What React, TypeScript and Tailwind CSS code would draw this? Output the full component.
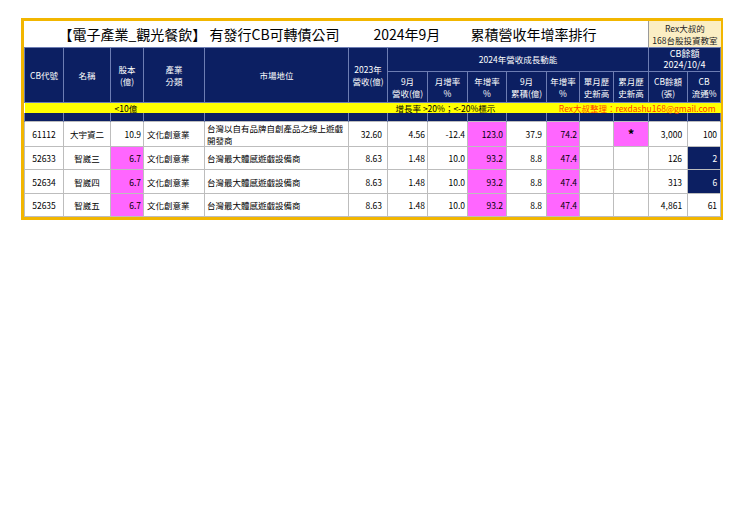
import React from "react";

type Row = {
  code: string;
  name: string;
  cap: string;
  capPink: boolean;
  industry: string;
  market: string;
  rev23: string;
  sep: string;
  mom: string;
  yoy: string;
  cum: string;
  cumYoy: string;
  hiMonth: string;
  hiCum: string;
  cbLeft: string;
  flow: string;
  flowNavy: boolean;
  height: string;
};

const rows: Row[] = [
  {
    code: "61112",
    name: "大宇資二",
    cap: "10.9",
    capPink: false,
    industry: "文化創意業",
    market: "台灣以自有品牌自創產品之線上遊戲開發商",
    rev23: "32.60",
    sep: "4.56",
    mom: "-12.4",
    yoy: "123.0",
    cum: "37.9",
    cumYoy: "74.2",
    hiMonth: "",
    hiCum: "*",
    cbLeft: "3,000",
    flow: "100",
    flowNavy: false,
    height: "h-[25px]",
  },
  {
    code: "52633",
    name: "智崴三",
    cap: "6.7",
    capPink: true,
    industry: "文化創意業",
    market: "台灣最大體感遊戲設備商",
    rev23: "8.63",
    sep: "1.48",
    mom: "10.0",
    yoy: "93.2",
    cum: "8.8",
    cumYoy: "47.4",
    hiMonth: "",
    hiCum: "",
    cbLeft: "126",
    flow: "2",
    flowNavy: true,
    height: "h-[23px]",
  },
  {
    code: "52634",
    name: "智崴四",
    cap: "6.7",
    capPink: true,
    industry: "文化創意業",
    market: "台灣最大體感遊戲設備商",
    rev23: "8.63",
    sep: "1.48",
    mom: "10.0",
    yoy: "93.2",
    cum: "8.8",
    cumYoy: "47.4",
    hiMonth: "",
    hiCum: "",
    cbLeft: "313",
    flow: "6",
    flowNavy: true,
    height: "h-[24px]",
  },
  {
    code: "52635",
    name: "智崴五",
    cap: "6.7",
    capPink: true,
    industry: "文化創意業",
    market: "台灣最大體感遊戲設備商",
    rev23: "8.63",
    sep: "1.48",
    mom: "10.0",
    yoy: "93.2",
    cum: "8.8",
    cumYoy: "47.4",
    hiMonth: "",
    hiCum: "",
    cbLeft: "4,861",
    flow: "61",
    flowNavy: false,
    height: "h-[23px]",
  },
];

const th = "border border-[#6d7db3] bg-[#0c1f62] text-white text-[8.5px] leading-[12px] font-normal text-center align-middle p-0";
const td = "border border-[#bdbdbd] text-[8.5px] leading-[12px] text-black align-middle p-0";

export default function App() {
  return (
    <div className="min-h-[523px] bg-white pt-[18px] pl-[21px] font-['Noto_Sans_CJK_TC',sans-serif]">
      <div className="w-[702px] border-[3px] border-[#f2b600] bg-white">
        <table className="w-[696px] table-fixed border-collapse">
          <colgroup>
            <col className="w-[39px]" />
            <col className="w-[47px]" />
            <col className="w-[33px]" />
            <col className="w-[61px]" />
            <col className="w-[144px]" />
            <col className="w-[39px]" />
            <col className="w-[40px]" />
            <col className="w-[40px]" />
            <col className="w-[39px]" />
            <col className="w-[40px]" />
            <col className="w-[33px]" />
            <col className="w-[34px]" />
            <col className="w-[35px]" />
            <col className="w-[39px]" />
            <col className="w-[33px]" />
          </colgroup>
          <tbody>
            {/* title */}
            <tr className="h-[26px]">
              <td colSpan={13} className="p-0 align-middle bg-white">
                <div className="flex items-center pl-[34px] text-[14px] leading-[20px] text-black">
                  <span className="w-[315px] shrink-0 whitespace-nowrap">【電子產業_觀光餐飲】 有發行CB可轉債公司</span>
                  <span className="w-[97px] shrink-0 whitespace-nowrap">2024年9月</span>
                  <span className="whitespace-nowrap">累積營收年增率排行</span>
                </div>
              </td>
              <td colSpan={2} className="p-0 border-l border-[#9a9a9a] bg-[#fbeec4] text-center align-middle text-[8.5px] leading-[12px] text-[#222]">
                <div>Rex大叔的</div>
                <div>168台股投資教室</div>
              </td>
            </tr>

            {/* header */}
            <tr className="h-[23px]">
              <th rowSpan={2} className={th}>CB代號</th>
              <th rowSpan={2} className={th}>名稱</th>
              <th rowSpan={2} className={th}>股本<br />(億)</th>
              <th rowSpan={2} className={th}>產業<br />分類</th>
              <th rowSpan={2} className={th}>市場地位</th>
              <th rowSpan={2} className={th}>2023年<br />營收(億)</th>
              <th colSpan={7} className={th}>2024年營收成長動能</th>
              <th colSpan={2} className="border border-[#6d7db3] bg-[#0c1f62] text-white text-[9px] leading-[11.5px] font-normal text-center align-middle p-0">
                <div>CB餘額</div>
                <div>2024/10/4</div>
              </th>
            </tr>
            <tr className="h-[31px]">
              <th className={th}>9月<br />營收(億)</th>
              <th className={th}>月增率<br />%</th>
              <th className={th}>年增率<br />%</th>
              <th className={th}>9月<br />累積(億)</th>
              <th className={th}>年增率<br />%</th>
              <th className={th}>單月歷<br />史新高</th>
              <th className={th}>累月歷<br />史新高</th>
              <th className={th}>CB餘額<br />(張)</th>
              <th className={th}>CB<br />流通%</th>
            </tr>

            {/* note row */}
            <tr className="h-[10px]">
              <td colSpan={2} className="p-0 bg-[#ffff00]" />
              <td colSpan={4} className="p-0 pl-[4px] bg-[#ffff00] text-[8.5px] leading-[10px] text-black whitespace-nowrap">&lt;10億</td>
              <td colSpan={4} className="p-0 pl-[8px] bg-[#ffff00] text-[8.5px] leading-[10px] text-black whitespace-nowrap">增長率 &gt;20%；&lt;-20%標示</td>
              <td colSpan={5} className="p-0 pr-[5px] bg-[#ffff00] text-right text-[8.5px] leading-[10px] text-[#ff3d00] whitespace-nowrap">Rex大叔整理：rexdashu168@gmail.com</td>
            </tr>

            {/* navy spacer */}
            <tr className="h-[9px]">
              {Array.from({ length: 15 }).map((_, i) => (
                <td key={i} className="p-0 border-x border-[#6d7db3] bg-[#0c1f62]" />
              ))}
            </tr>

            {rows.map((r) => (
              <tr key={r.code} className={r.height}>
                <td className={td + " text-center"}>{r.code}</td>
                <td className={td + " text-center"}>{r.name}</td>
                <td className={td + " text-right pr-[2px] " + (r.capPink ? "bg-[#ff66ff]" : "bg-white")}>{r.cap}</td>
                <td className={td + " pl-[3px] whitespace-nowrap"}>{r.industry}</td>
                <td className={td + " pl-[2px]"}>{r.market}</td>
                <td className={td + " text-right pr-[5px]"}>{r.rev23}</td>
                <td className={td + " text-right pr-[2px]"}>{r.sep}</td>
                <td className={td + " text-right pr-[2px]"}>{r.mom}</td>
                <td className={td + " text-right pr-[3px] bg-[#ff66ff]"}>{r.yoy}</td>
                <td className={td + " text-right pr-[4px]"}>{r.cum}</td>
                <td className={td + " text-right pr-[2px] bg-[#ff66ff]"}>{r.cumYoy}</td>
                <td className={td + " text-center"}>{r.hiMonth}</td>
                <td className={td + " text-center text-[13px] font-bold " + (r.hiCum ? "bg-[#ff66ff]" : "bg-white")}>{r.hiCum}</td>
                <td className={td + " text-right pr-[5px]"}>{r.cbLeft}</td>
                <td
                  className={
                    td +
                    " text-right pr-[3px] " +
                    (r.flowNavy ? "bg-[#0c1f62] !text-white" : "bg-white")
                  }
                >
                  {r.flow}
                </td>
              </tr>
            ))}
          </tbody>
        </table>
      </div>
    </div>
  );
}
